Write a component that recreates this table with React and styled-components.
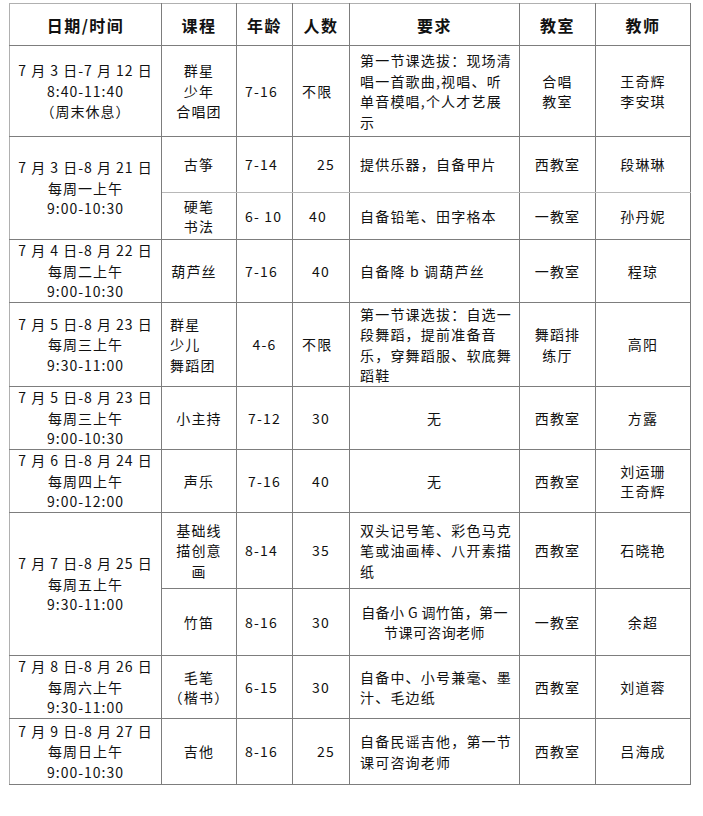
import React from "react";
import styled, { createGlobalStyle } from "styled-components";

const GlobalStyle = createGlobalStyle`
  html, body { margin: 0; padding: 0; background: #fff; }
  body {
    font-family: "Noto Sans CJK SC", "Liberation Sans", sans-serif;
    color: #111;
  }
`;

const Page = styled.div`
  padding: 3px 0 0 9px;
`;

const Table = styled.table`
  border-collapse: collapse;
  table-layout: fixed;
  width: 682px;
`;

const Col = styled.col`
  width: ${(p) => p.$w}px;
`;

const HeadRow = styled.tr`
  height: 42px;
`;

const HeadCell = styled.th`
  border: 1px solid #7d7d7d;
  border-top-color: #b0b0b0;
  font-size: 16px;
  font-weight: 700;
  letter-spacing: 1.5px;
  text-align: center;
  vertical-align: middle;
  padding: 0;
  white-space: nowrap;
  &:first-child { border-left-color: #b0b0b0; }
`;

const Row = styled.tr`
  height: ${(p) => p.$h}px;
`;

const Cell = styled.td`
  border: 1px solid #7d7d7d;
  font-size: 14px;
  line-height: 20.5px;
  letter-spacing: ${(p) => (p.$ls !== undefined ? p.$ls : 1.2)}px;
  text-align: ${(p) => p.$align || "center"};
  vertical-align: middle;
  padding: 0 ${(p) => (p.$pr !== undefined ? p.$pr : 4)}px 0 ${(p) => (p.$pl !== undefined ? p.$pl : 4)}px;
  white-space: nowrap;
  overflow: visible;
`;

const DateCell = styled(Cell)`
  border-left-color: #b0b0b0;
  padding: 0;
  letter-spacing: 1px;
`;

const SplitCell = styled(Cell)`
  border-bottom-color: #b8b8b8;
`;

const Lines = ({ children }) => {
  const items = Array.isArray(children) ? children : [children];
  return items.map((t, i) => (
    <React.Fragment key={i}>
      {i > 0 && <br />}
      {t}
    </React.Fragment>
  ));
};

export default function App() {
  return (
    <Page>
      <GlobalStyle />
      <Table>
        <colgroup>
          <Col $w={152} />
          <Col $w={75} />
          <Col $w={56} />
          <Col $w={57} />
          <Col $w={170} />
          <Col $w={76} />
          <Col $w={95} />
        </colgroup>
        <thead>
          <HeadRow>
            <HeadCell>日期/时间</HeadCell>
            <HeadCell>课程</HeadCell>
            <HeadCell>年龄</HeadCell>
            <HeadCell>人数</HeadCell>
            <HeadCell>要求</HeadCell>
            <HeadCell>教室</HeadCell>
            <HeadCell>教师</HeadCell>
          </HeadRow>
        </thead>
        <tbody>
          <Row $h={91}>
            <DateCell>
              <Lines>{["7 月 3 日-7 月 12 日", "8:40-11:40", "（周末休息）"]}</Lines>
            </DateCell>
            <Cell><Lines>{["群星", "少年", "合唱团"]}</Lines></Cell>
            <Cell $align="left" $pl={8}>7-16</Cell>
            <Cell $align="left" $pl={9}>不限</Cell>
            <Cell $align="left" $pl={10}>
              <Lines>{["第一节课选拔：现场清", "唱一首歌曲,视唱、听", "单音模唱,个人才艺展", "示"]}</Lines>
            </Cell>
            <Cell><Lines>{["合唱", "教室"]}</Lines></Cell>
            <Cell><Lines>{["王奇辉", "李安琪"]}</Lines></Cell>
          </Row>

          <Row $h={56}>
            <DateCell rowSpan={2}>
              <Lines>{["7 月 3 日-8 月 21 日", "每周一上午", "9:00-10:30"]}</Lines>
            </DateCell>
            <SplitCell>古筝</SplitCell>
            <SplitCell $align="left" $pl={8}>7-14</SplitCell>
            <SplitCell $align="left" $pl={24}>25</SplitCell>
            <SplitCell $align="left" $pl={10}>提供乐器，自备甲片</SplitCell>
            <SplitCell>西教室</SplitCell>
            <SplitCell>段琳琳</SplitCell>
          </Row>
          <Row $h={47}>
            <Cell><Lines>{["硬笔", "书法"]}</Lines></Cell>
            <Cell $align="left" $pl={8}>6- 10</Cell>
            <Cell $align="left" $pl={16}>40</Cell>
            <Cell $align="left" $pl={10}>自备铅笔、田字格本</Cell>
            <Cell>一教室</Cell>
            <Cell>孙丹妮</Cell>
          </Row>

          <Row $h={63}>
            <DateCell>
              <Lines>{["7 月 4 日-8 月 22 日", "每周二上午", "9:00-10:30"]}</Lines>
            </DateCell>
            <Cell $pr={14}>葫芦丝</Cell>
            <Cell $align="left" $pl={8}>7-16</Cell>
            <Cell>40</Cell>
            <Cell $align="left" $pl={10}>自备降 b 调葫芦丝</Cell>
            <Cell>一教室</Cell>
            <Cell>程琼</Cell>
          </Row>

          <Row $h={84}>
            <DateCell>
              <Lines>{["7 月 5 日-8 月 23 日", "每周三上午", "9:30-11:00"]}</Lines>
            </DateCell>
            <Cell $align="left" $pl={8}><Lines>{["群星", "少儿", "舞蹈团"]}</Lines></Cell>
            <Cell>4-6</Cell>
            <Cell $align="left" $pl={9}>不限</Cell>
            <Cell $align="left" $pl={10}>
              <Lines>{["第一节课选拔：自选一", "段舞蹈，提前准备音", "乐，穿舞蹈服、软底舞", "蹈鞋"]}</Lines>
            </Cell>
            <Cell><Lines>{["舞蹈排", "练厅"]}</Lines></Cell>
            <Cell>高阳</Cell>
          </Row>

          <Row $h={63}>
            <DateCell>
              <Lines>{["7 月 5 日-8 月 23 日", "每周三上午", "9:00-10:30"]}</Lines>
            </DateCell>
            <Cell>小主持</Cell>
            <Cell>7-12</Cell>
            <Cell>30</Cell>
            <Cell>无</Cell>
            <Cell>西教室</Cell>
            <Cell>方露</Cell>
          </Row>

          <Row $h={63}>
            <DateCell>
              <Lines>{["7 月 6 日-8 月 24 日", "每周四上午", "9:00-12:00"]}</Lines>
            </DateCell>
            <Cell>声乐</Cell>
            <Cell>7-16</Cell>
            <Cell>40</Cell>
            <Cell>无</Cell>
            <Cell>西教室</Cell>
            <Cell><Lines>{["刘运珊", "王奇辉"]}</Lines></Cell>
          </Row>

          <Row $h={76}>
            <DateCell rowSpan={2}>
              <Lines>{["7 月 7 日-8 月 25 日", "每周五上午", "9:30-11:00"]}</Lines>
            </DateCell>
            <Cell><Lines>{["基础线", "描创意", "画"]}</Lines></Cell>
            <Cell $align="left" $pl={8}>8-14</Cell>
            <Cell>35</Cell>
            <Cell $align="left" $pl={10}>
              <Lines>{["双头记号笔、彩色马克", "笔或油画棒、八开素描", "纸"]}</Lines>
            </Cell>
            <Cell>西教室</Cell>
            <Cell>石晓艳</Cell>
          </Row>
          <Row $h={67}>
            <Cell>竹笛</Cell>
            <Cell $align="left" $pl={8}>8-16</Cell>
            <Cell>30</Cell>
            <Cell $ls={0.4} $pl={2} $pr={2}>
              <Lines>{["自备小 G 调竹笛，第一", "节课可咨询老师"]}</Lines>
            </Cell>
            <Cell>一教室</Cell>
            <Cell>余超</Cell>
          </Row>

          <Row $h={63}>
            <DateCell>
              <Lines>{["7 月 8 日-8 月 26 日", "每周六上午", "9:30-11:00"]}</Lines>
            </DateCell>
            <Cell><Lines>{["毛笔", "（楷书）"]}</Lines></Cell>
            <Cell $align="left" $pl={8}>6-15</Cell>
            <Cell>30</Cell>
            <Cell $align="left" $pl={10}>
              <Lines>{["自备中、小号兼毫、墨", "汁、毛边纸"]}</Lines>
            </Cell>
            <Cell>西教室</Cell>
            <Cell>刘道蓉</Cell>
          </Row>

          <Row $h={66}>
            <DateCell>
              <Lines>{["7 月 9 日-8 月 27 日", "每周日上午", "9:00-10:30"]}</Lines>
            </DateCell>
            <Cell>吉他</Cell>
            <Cell $align="left" $pl={8}>8-16</Cell>
            <Cell $align="left" $pl={24}>25</Cell>
            <Cell $align="left" $pl={10}>
              <Lines>{["自备民谣吉他，第一节", "课可咨询老师"]}</Lines>
            </Cell>
            <Cell>西教室</Cell>
            <Cell>吕海成</Cell>
          </Row>
        </tbody>
      </Table>
    </Page>
  );
}
